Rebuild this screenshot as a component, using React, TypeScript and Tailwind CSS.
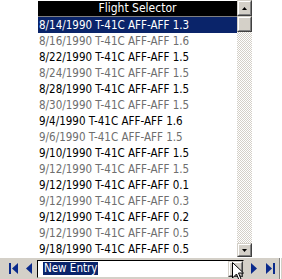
import React from 'react';

const rows = [
    '8/14/1990 T-41C AFF-AFF 1.3',
    '8/16/1990 T-41C AFF-AFF 1.6',
    '8/22/1990 T-41C AFF-AFF 1.5',
    '8/24/1990 T-41C AFF-AFF 1.5',
    '8/28/1990 T-41C AFF-AFF 1.5',
    '8/30/1990 T-41C AFF-AFF 1.5',
    '9/4/1990 T-41C AFF-AFF 1.6',
    '9/6/1990 T-41C AFF-AFF 1.5',
    '9/10/1990 T-41C AFF-AFF 1.5',
    '9/12/1990 T-41C AFF-AFF 1.5',
    '9/12/1990 T-41C AFF-AFF 0.1',
    '9/12/1990 T-41C AFF-AFF 0.3',
    '9/12/1990 T-41C AFF-AFF 0.2',
    '9/12/1990 T-41C AFF-AFF 0.5',
    '9/18/1990 T-41C AFF-AFF 0.5',
];

const font = { fontFamily: '"DejaVu Sans Condensed", "DejaVu Sans", sans-serif' };

const Btn3D: React.FC<{ className?: string; children?: React.ReactNode }> = ({ className = '', children }) => (
    <div className={`bg-[#d4d0c8] border border-t-[#d4d0c8] border-l-[#d4d0c8] border-r-[#404040] border-b-[#404040] ${className}`}>
        <div className="w-full h-full border border-t-white border-l-white border-r-[#808080] border-b-[#808080] flex items-center justify-center">
            {children}
        </div>
    </div>
);

const TriUp = () => (
    <svg width="5" height="3" viewBox="0 0 5 3"><path d="M2.5 0 L5 3 L0 3 Z" fill="#000" /></svg>
);
const TriDown = () => (
    <svg width="5" height="3" viewBox="0 0 5 3"><path d="M0 0 L5 0 L2.5 3 Z" fill="#000" /></svg>
);

const App: React.FC = () => {
    return (
        <div className="w-[282px] h-[279px] bg-white relative overflow-hidden select-none" style={font}>
            <div className="flex h-[257px]">
                <div className="w-[38px]" />
                <div className="w-[199px] flex flex-col">
                    <div className="h-[1px]" />
                    <div className="h-[15px] bg-black text-white text-[12px] leading-[15px] text-center">Flight Selector</div>
                    <div className="h-[1px] bg-[#808080]" />
                    {rows.map((r, i) => (
                        <div
                            key={i}
                            className={`h-[16px] leading-[16px] text-[11.5px] pl-[1px] whitespace-nowrap ${
                                i === 0 ? 'bg-[#0a246a] text-white' : i % 2 === 1 ? 'text-[#6e6e6e]' : 'text-black'
                            }`}
                        >
                            {r}
                        </div>
                    ))}
                </div>
                <div className="w-[15px] flex flex-col">
                    <Btn3D className="h-[16px]"><TriUp /></Btn3D>
                    <Btn3D className="h-[16px]" />
                    <div className="flex-1 bg-[repeating-conic-gradient(#d4d0c8_0_25%,#ffffff_0_50%)] bg-[length:2px_2px]" />
                    <Btn3D className="h-[14px]"><TriDown /></Btn3D>
                </div>
            </div>
            <div className="h-[22px] bg-[#d4d0c8] border-t border-t-white flex items-center relative">
                <div className="w-[37px] flex items-center pl-[9px] gap-[8px]">
                    <svg width="9" height="11" viewBox="0 0 9 11">
                        <rect x="0" y="0" width="2" height="11" fill="#0a2a8c" />
                        <path d="M9 0 L3 5.5 L9 11 Z" fill="#0a2a8c" />
                    </svg>
                    <svg width="6" height="11" viewBox="0 0 6 11">
                        <path d="M6 0 L0 5.5 L6 11 Z" fill="#0a2a8c" />
                    </svg>
                </div>
                <div className="w-[207px] h-[18px] bg-white border-t border-l border-t-black border-l-black border-b border-r border-b-[#d4d0c8] border-r-[#d4d0c8] flex items-center">
                    <span className="ml-[5px] bg-[#0a246a] text-white text-[11.5px] leading-[13px] px-[1px]">New Entry</span>
                    <div className="flex-1" />
                    <Btn3D className="w-[15px] h-[16px]"><TriDown /></Btn3D>
                </div>
                <div className="flex items-center pl-[7px] gap-[9px]">
                    <svg width="6" height="11" viewBox="0 0 6 11">
                        <path d="M0 0 L6 5.5 L0 11 Z" fill="#0a2a8c" />
                    </svg>
                    <svg width="9" height="11" viewBox="0 0 9 11">
                        <path d="M0 0 L6 5.5 L0 11 Z" fill="#0a2a8c" />
                        <rect x="7" y="0" width="2" height="11" fill="#0a2a8c" />
                    </svg>
                </div>
                <div className="absolute right-[2px] top-0 bottom-0 w-[1px] bg-[#808080]" />
                <div className="absolute right-[1px] top-0 bottom-0 w-[1px] bg-white" />
            </div>
            <svg className="absolute left-[232px] top-[262px]" width="12" height="19" viewBox="0 0 12 19">
                <path d="M0.5 0.5 L0.5 16 L4.5 12 L7 18 L9 17 L6.5 11 L11.5 11 Z" fill="#fff" stroke="#000" strokeWidth="1" />
            </svg>
        </div>
    );
};

export default App;
